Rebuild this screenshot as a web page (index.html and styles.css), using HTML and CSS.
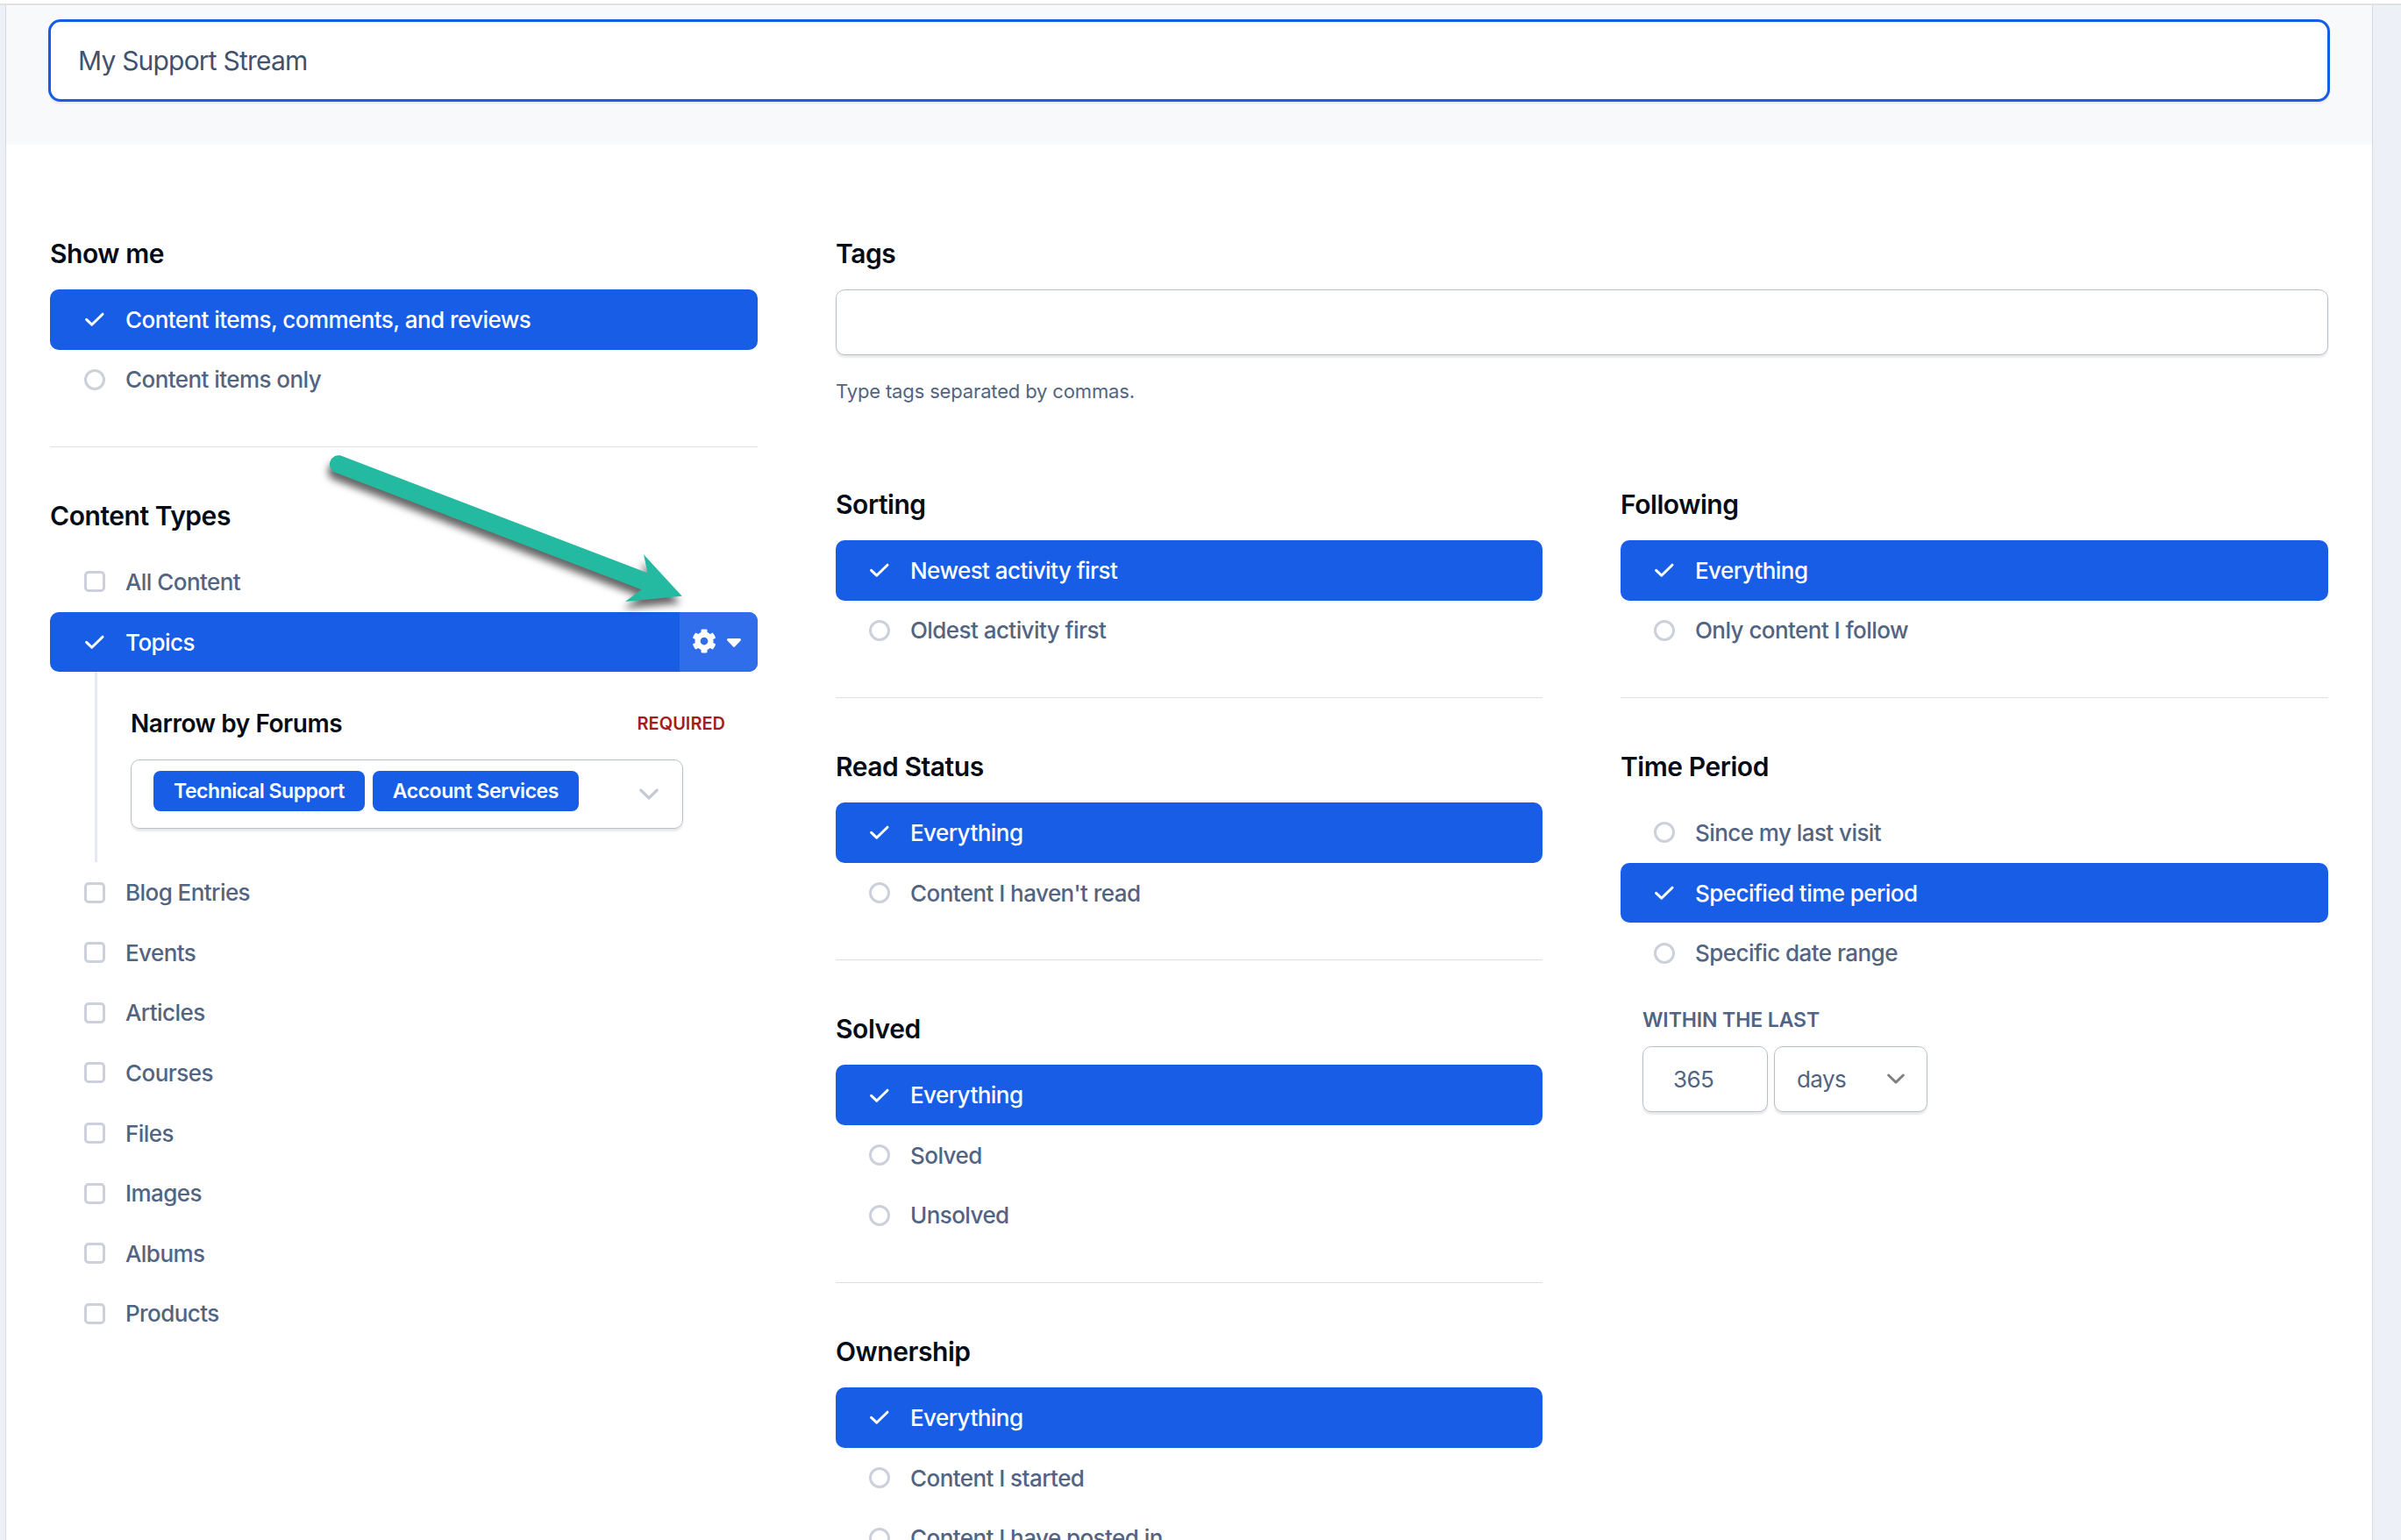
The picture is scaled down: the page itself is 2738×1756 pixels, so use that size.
FILE: index.html
```html
<!DOCTYPE html>
<html lang="en">
<head>
    <meta charset="utf-8" />
    <title>My Support Stream</title>
    <link rel="stylesheet" href="styles.css">
</head>
<body>
    <!-- shared icons -->
    <svg class="sprite">
      <symbol id="check" viewBox="0 0 24 24"><path d="M2.600 12.300 L8.700 18.200 L21 6.200" fill="none" stroke="#fff" stroke-width="3" stroke-linecap="round" stroke-linejoin="round"/></symbol>
      <symbol id="chevron" viewBox="0 0 22 14"><path d="M1.8 2 L11 11 L20.2 2" fill="none" stroke="currentColor" stroke-width="3.2" stroke-linecap="round" stroke-linejoin="round"/></symbol>
    </svg>

    <div class="top_line"></div>
    <div class="panel">
      <div class="stream_header">
        <input class="stream_title" type="text" value="My Support Stream">
      </div>

      <div class="filters">
        <!-- left column -->
        <div class="col">
          <section class="filter">
            <h3>Show me</h3>
            <ul class="options">
              <li class="on"><svg class="mark"><use href="#check"/></svg>Content items, comments, and reviews</li>
              <li><i class="radio"></i>Content items only</li>
            </ul>
          </section>
          <section class="filter">
            <h3>Content Types</h3>
            <ul class="options">
              <li><i class="box"></i>All Content</li>
              <li class="on"><svg class="mark"><use href="#check"/></svg>Topics
                <span class="gear_btn">
                  <svg class="gear" viewBox="0 0 512 512"><path fill="#fff" d="M487.4 315.7l-42.6-24.6c4.3-23.2 4.3-47 0-70.2l42.6-24.6c4.9-2.8 7.1-8.6 5.5-14-11.1-35.6-30-67.8-54.7-94.6-3.8-4.1-10-5.1-14.8-2.3L380.8 110c-17.9-15.4-38.5-27.3-60.8-35.1V25.8c0-5.6-3.9-10.5-9.4-11.7-36.7-8.2-74.3-7.8-109.2 0-5.5 1.2-9.4 6.1-9.4 11.7V75c-22.2 7.9-42.8 19.8-60.8 35.1L88.7 85.5c-4.9-2.8-11-1.9-14.8 2.3-24.7 26.7-43.6 58.9-54.7 94.6-1.7 5.4.6 11.2 5.5 14L67.3 221c-4.3 23.2-4.3 47 0 70.2l-42.6 24.6c-4.9 2.8-7.1 8.6-5.5 14 11.1 35.6 30 67.8 54.7 94.6 3.8 4.1 10 5.1 14.8 2.3l42.6-24.6c17.9 15.4 38.5 27.3 60.8 35.1v49.2c0 5.6 3.9 10.5 9.4 11.7 36.7 8.2 74.3 7.8 109.2 0 5.5-1.2 9.4-6.1 9.4-11.7v-49.2c22.2-7.9 42.8-19.8 60.8-35.1l42.6 24.6c4.9 2.8 11 1.9 14.8-2.3 24.7-26.7 43.6-58.9 54.7-94.6 1.5-5.5-.7-11.3-5.6-14.1zM256 336c-44.1 0-80-35.9-80-80s35.9-80 80-80 80 35.9 80 80-35.9 80-80 80z"/></svg>
                  <svg class="caret" viewBox="0 0 16 10"><path fill="#fff" d="M1.5 0h13c1.3 0 2 1.5 1 2.500l-6.400 6.800c-.6.7-1.600.7-2.200 0L.5 2.500C-.5 1.500.2 0 1.500 0z"/></svg>
                </span>
              </li>
            </ul>
            <div class="narrow">
              <div class="narrow_head">
                <h4>Narrow by Forums</h4>
                <span class="required">REQUIRED</span>
              </div>
              <div class="forum_select">
                <span class="chip">Technical Support</span>
                <span class="chip">Account Services</span>
                <svg class="arrow"><use href="#chevron"/></svg>
              </div>
            </div>
            <ul class="options">
              <li><i class="box"></i>Blog Entries</li>
              <li><i class="box"></i>Events</li>
              <li><i class="box"></i>Articles</li>
              <li><i class="box"></i>Courses</li>
              <li><i class="box"></i>Files</li>
              <li><i class="box"></i>Images</li>
              <li><i class="box"></i>Albums</li>
              <li><i class="box"></i>Products</li>
            </ul>
          </section>
        </div>

        <!-- tags and the two columns under it -->
        <div class="wide">
          <section class="tags">
            <h3>Tags</h3>
            <input class="field" type="text">
            <p>Type tags separated by commas.</p>
          </section>
          <div class="cols">
            <div class="col">
              <section class="filter">
                <h3>Sorting</h3>
                <ul class="options">
                  <li class="on"><svg class="mark"><use href="#check"/></svg>Newest activity first</li>
                  <li><i class="radio"></i>Oldest activity first</li>
                </ul>
              </section>
              <section class="filter">
                <h3>Read Status</h3>
                <ul class="options">
                  <li class="on"><svg class="mark"><use href="#check"/></svg>Everything</li>
                  <li><i class="radio"></i>Content I haven't read</li>
                </ul>
              </section>
              <section class="filter">
                <h3>Solved</h3>
                <ul class="options">
                  <li class="on"><svg class="mark"><use href="#check"/></svg>Everything</li>
                  <li><i class="radio"></i>Solved</li>
                  <li><i class="radio"></i>Unsolved</li>
                </ul>
              </section>
              <section class="filter">
                <h3>Ownership</h3>
                <ul class="options">
                  <li class="on"><svg class="mark"><use href="#check"/></svg>Everything</li>
                  <li><i class="radio"></i>Content I started</li>
                  <li><i class="radio"></i>Content I have posted in</li>
                </ul>
              </section>
            </div>
            <div class="col">
              <section class="filter">
                <h3>Following</h3>
                <ul class="options">
                  <li class="on"><svg class="mark"><use href="#check"/></svg>Everything</li>
                  <li><i class="radio"></i>Only content I follow</li>
                </ul>
              </section>
              <section class="filter">
                <h3>Time Period</h3>
                <ul class="options">
                  <li><i class="radio"></i>Since my last visit</li>
                  <li class="on"><svg class="mark"><use href="#check"/></svg>Specified time period</li>
                  <li><i class="radio"></i>Specific date range</li>
                </ul>
                <div class="within">
                  <h5>WITHIN THE LAST</h5>
                  <div class="within_row">
                    <input class="field days_num" type="text" value="365">
                    <div class="field days_unit">days <svg class="arrow_small"><use href="#chevron"/></svg></div>
                  </div>
                </div>
              </section>
            </div>
          </div>
        </div>
      </div>
    </div>

    <!-- pointer to the gear button -->
    <svg class="pointer" viewBox="0 0 440 200">
      <path fill="#24baa1" d="M38 19.300 L388.400 153.300 L384 132.300 L427.700 179.700 L363 186 L381.500 172.300 L31 38.300 A10.300 10.300 0 0 1 38 19.300 Z"/>
    </svg>
</body>
</html>
```
FILE: styles.css
```css
* {
  margin: 0;
  padding: 0;
  box-sizing: border-box;
}
body {
  position: relative;
  height: 1756px;
  overflow: hidden;
  background-color: #edf1f7;
  font-family: Inter, "Liberation Sans", sans-serif;
  font-size: 26px;
  color: #526482;
}
input {
  font-family: inherit;
  outline: none;
}
.sprite {
  display: none;
}
.top_line {
  height: 6px;
  background-color: #fff;
  border-bottom: 2px solid #e1e1e1;
}
.panel {
  width: 2700px;
  height: 1750px;
  margin-left: 6px;
  background-color: #fff;
  border: solid #d3dae5;
  border-width: 0 1px;
  overflow: hidden;
}
/* stream name */
.stream_header {
  height: 159px;
  padding: 16px 48px;
  background-color: #f7f9fb;
}
.stream_title {
  display: block;
  width: 100%;
  height: 94px;
  padding: 0 31px;
  border: 3px solid #175de5;
  border-radius: 14px;
  background-color: #fff;
  box-shadow: 0 2px 2px rgba(0, 0, 0, 0.08);
  color: #41516e;
  font-size: 30px;
  letter-spacing: -0.8px;
}
/* columns */
.filters {
  display: grid;
  grid-template-columns: 807px 1702px;
  column-gap: 89px;
  padding: 104px 50px 0;
}
.cols {
  display: grid;
  grid-template-columns: 806px 807px;
  column-gap: 89px;
}
h3 {
  height: 40px;
  margin-bottom: 21px;
  line-height: 40px;
  font-size: 30px;
  font-weight: 600;
  letter-spacing: -0.45px;
  color: #060c16;
}
.filter + .filter {
  margin-top: 42px;
  padding-top: 58px;
  border-top: 1px solid #dbe0ea;
}
.options {
  list-style: none;
}
.options li {
  display: flex;
  align-items: center;
  height: 68.6px;
  padding-left: 39px;
  font-weight: 500;
  letter-spacing: -0.56px;
}
.wide .options li {
  padding-left: 38px;
}
.options .on {
  border-radius: 10px;
  background-color: #175de5;
  color: #fff;
}
.radio, .box, .mark {
  width: 24px;
  height: 24px;
  margin-right: 23px;
}
.radio, .box {
  border: 3px solid #cbd0da;
  border-radius: 50%;
}
.box {
  border-radius: 5px;
}
/* gear menu on the selected row */
.gear_btn {
  display: flex;
  align-items: center;
  width: 89px;
  height: 100%;
  margin-left: auto;
  padding-left: 14px;
  border-radius: 0 10px 10px 0;
  background-color: #2f6dea;
}
.gear {
  width: 28px;
  height: 28px;
  margin: 0 12px 2px 0;
}
.caret {
  width: 16px;
  height: 10px;
  margin-top: 2px;
}
/* forums under Topics */
.narrow {
  height: 217px;
  margin-left: 51px;
  padding: 39px 0 0 38px;
  border-left: 3px solid #e4e9f2;
}
.narrow_head {
  display: flex;
  justify-content: space-between;
  align-items: center;
  height: 40px;
  padding-right: 37px;
}
h4 {
  font-size: 28px;
  font-weight: 600;
  letter-spacing: -0.45px;
  color: #060c16;
}
.required {
  font-size: 20px;
  font-weight: 600;
  color: #a51c1c;
}
.forum_select {
  display: flex;
  align-items: flex-start;
  gap: 9px;
  width: 630px;
  height: 79px;
  margin-top: 21px;
  padding: 12px 27px 0 25px;
  border: 1px solid #b9bfca;
  border-radius: 10px;
  box-shadow: 0 3px 2px rgba(0, 0, 0, 0.09);
}
.chip {
  height: 46px;
  padding: 0 23px;
  border-radius: 8px;
  background-color: #175de5;
  line-height: 46px;
  font-size: 23px;
  font-weight: 600;
  letter-spacing: -0.46px;
  color: #fff;
  white-space: nowrap;
}
.arrow {
  width: 22px;
  height: 14px;
  margin: 20px 0 0 auto;
  color: #c5cad3;
}
/* inputs */
.field {
  display: block;
  width: 100%;
  height: 75px;
  border: 1px solid #b9bfca;
  border-radius: 10px;
  background-color: #fff;
  box-shadow: 0 3px 2px rgba(0, 0, 0, 0.09);
  color: #526482;
  font-size: 26px;
  letter-spacing: -0.6px;
}
.tags {
  height: 286px;
}
.tags p {
  margin-top: 26px;
  line-height: 30px;
  font-size: 22px;
  letter-spacing: -0.15px;
}
/* time period */
.within {
  padding: 27px 0 0 25px;
}
h5 {
  line-height: 30px;
  margin-bottom: 15px;
  font-size: 23px;
  font-weight: 600;
  letter-spacing: -0.1px;
}
.within_row {
  display: flex;
  gap: 7px;
}
.days_num {
  width: 143px;
  padding-left: 34px;
}
.days_unit {
  display: flex;
  justify-content: space-between;
  align-items: center;
  width: 175px;
  padding: 0 25px 0 25px;
}
.arrow_small {
  width: 20px;
  height: 13px;
  color: #808080;
}
.pointer {
  position: absolute;
  left: 350px;
  top: 500px;
  width: 440px;
  height: 200px;
  overflow: visible;
  filter: drop-shadow(-2px 8px 4px rgba(0, 0, 0, 0.6));
}
```
